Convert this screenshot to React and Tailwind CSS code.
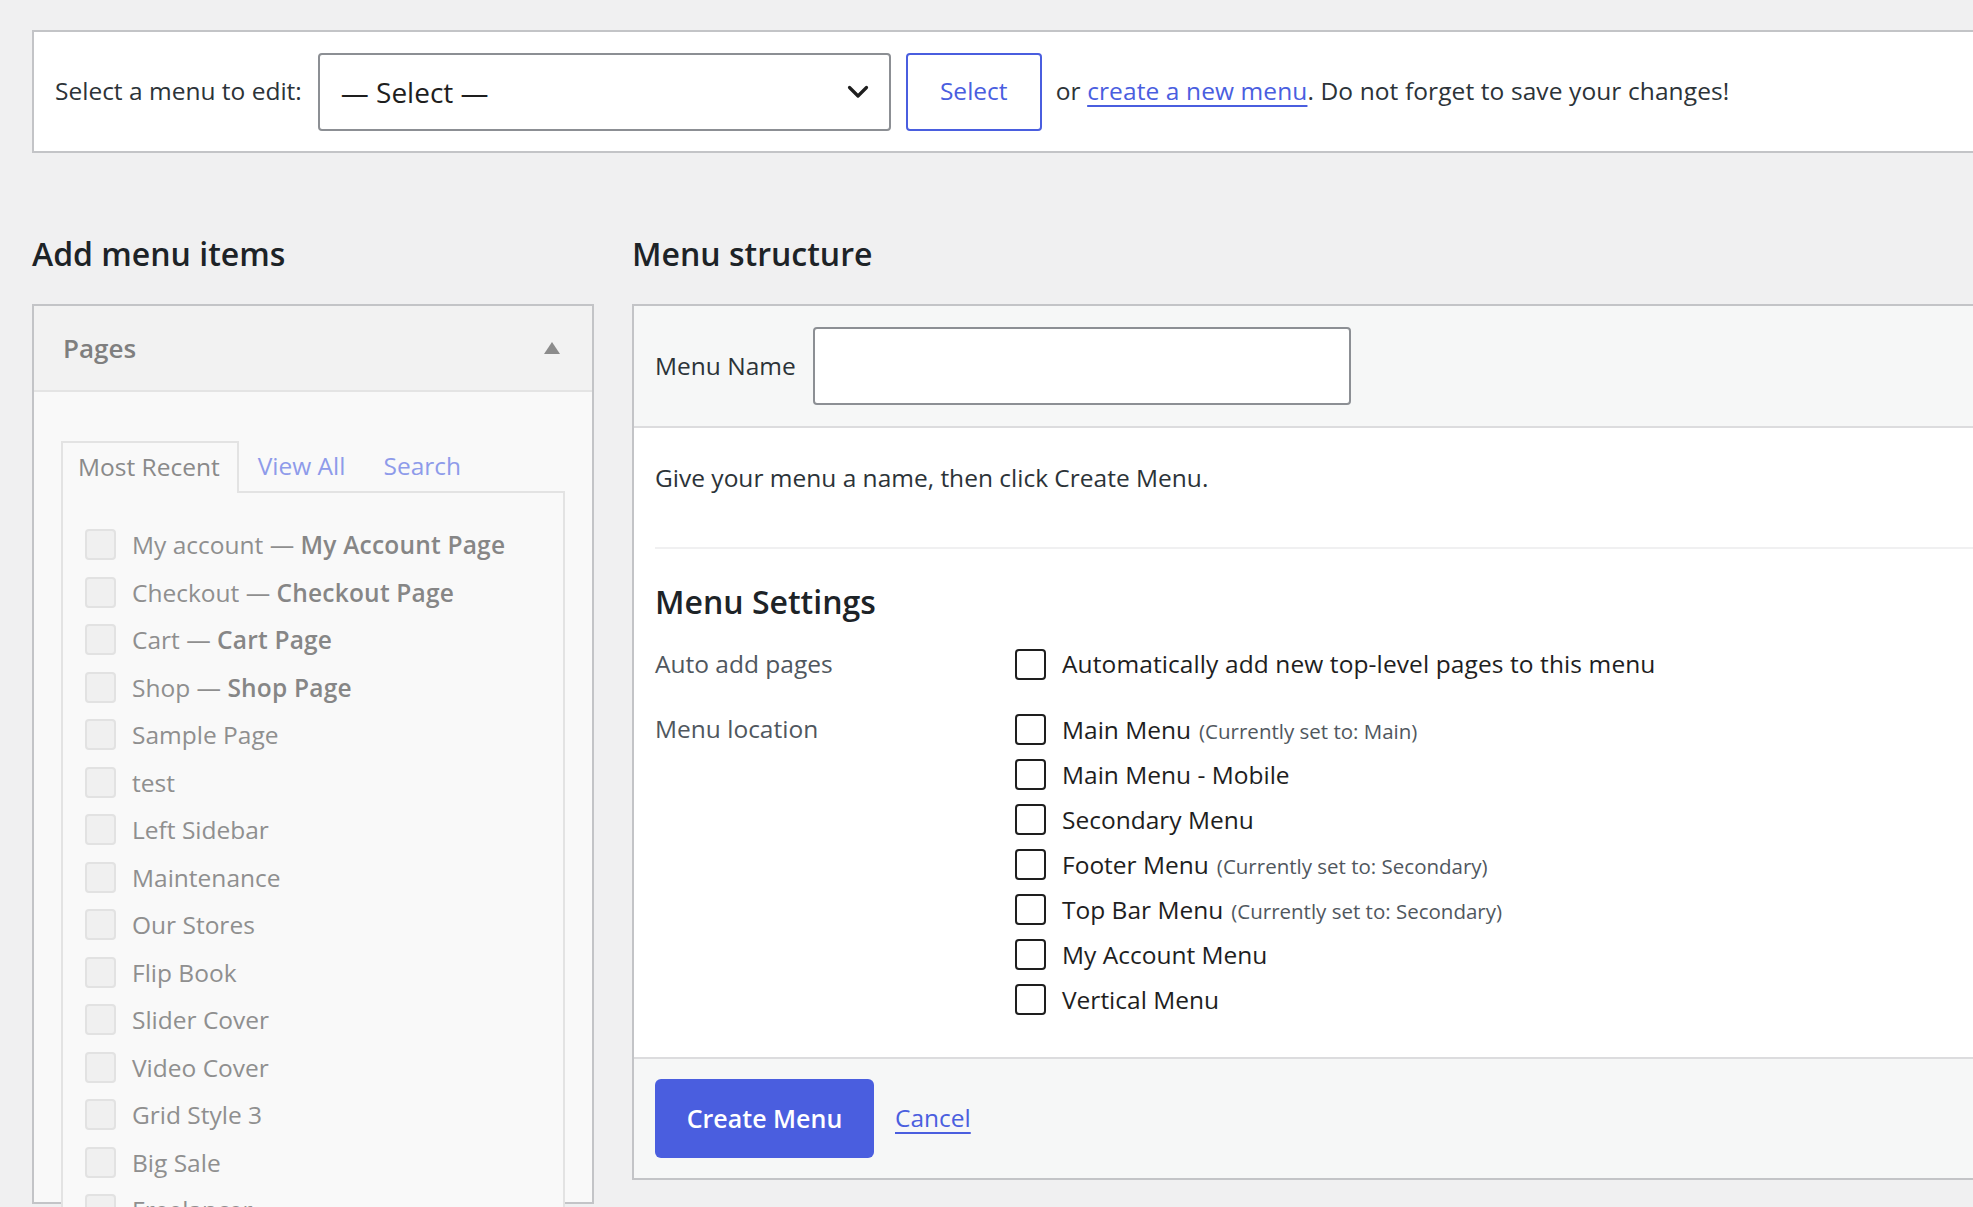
import React from "react";

const recentPages = [
  ["My account", "My Account Page"],
  ["Checkout", "Checkout Page"],
  ["Cart", "Cart Page"],
  ["Shop", "Shop Page"],
  ["Sample Page"],
  ["test"],
  ["Left Sidebar"],
  ["Maintenance"],
  ["Our Stores"],
  ["Flip Book"],
  ["Slider Cover"],
  ["Video Cover"],
  ["Grid Style 3"],
  ["Big Sale"],
  ["Freelancer"],
];

const locations = [
  ["Main Menu", "(Currently set to: Main)"],
  ["Main Menu - Mobile"],
  ["Secondary Menu"],
  ["Footer Menu", "(Currently set to: Secondary)"],
  ["Top Bar Menu", "(Currently set to: Secondary)"],
  ["My Account Menu"],
  ["Vertical Menu"],
];

function Chevron() {
  return (
    <svg width="22" height="14" viewBox="0 0 22 14" fill="none">
      <path d="M2.5 2.5 L11 11 L19.5 2.5" stroke="#1e1e1e" strokeWidth="3.2" strokeLinecap="round" strokeLinejoin="round" />
    </svg>
  );
}

function Box() {
  return <span className="block h-[31px] w-[31px] shrink-0 rounded-[4px] border-2 border-[#1e1e1e] bg-white" />;
}

function FadedBox() {
  return <span className="block h-[31px] w-[31px] shrink-0 rounded-[4px] border-2 border-[#e2e2e2] bg-[#f0f0f0]" />;
}

export default function App() {
  return (
    <div className="h-[1207px] w-[1973px] overflow-hidden bg-[#f0f0f1] font-['Open_Sans','Noto_Sans',sans-serif] text-[24.5px] text-[#1d2327]">
      <div className="pl-[32px] pt-[30px]">
        {/* menu picker bar */}
        <div className="-mr-[40px] flex h-[123px] items-center border-2 border-[#c3c4c7] bg-white pl-[21px]">
          <span className="text-[#2c3338]">Select a menu to edit:</span>
          <div className="ml-[16px] flex h-[78px] w-[573px] items-center justify-between rounded-[4px] border-2 border-[#8c8f94] bg-white pl-[21px] pr-[20px]">
            <span className="text-[28px] text-[#1e1e1e]">— Select —</span>
            <Chevron />
          </div>
          <button className="ml-[15px] h-[78px] w-[136px] rounded-[4px] border-2 border-[#4a5edf] bg-white text-[24.5px] font-medium text-[#4a5edf]">
            Select
          </button>
          <span className="ml-[14px] tracking-[0.1px] text-[#2c3338]">
            or{" "}
            <a href="#" className="text-[#4a5edf] underline decoration-[2px] underline-offset-[5px]">
              create a new menu
            </a>
            . Do not forget to save your changes!
          </span>
        </div>

        <div className="mt-[81px] flex gap-[38px]">
          {/* left column */}
          <div className="w-[562px] shrink-0">
            <h2 className="h-[40px] text-[32px] font-semibold leading-[40px] text-[#1d2327]">Add menu items</h2>
            <div className="mt-[30px] h-[900px] border-2 border-[#c3c4c7] bg-[#f9f9f9]">
              <div className="flex h-[86px] items-center justify-between border-b-2 border-[#e4e4e4] bg-[#f2f2f2] pl-[29px] pr-[32px]">
                <span className="text-[26px] font-semibold text-[#7f7f7f]">Pages</span>
                <svg width="16" height="12" viewBox="0 0 16 12">
                  <path d="M8 0 L16 12 L0 12 Z" fill="#8c8c8c" />
                </svg>
              </div>
              <div className="px-[27px] pt-[49px]">
                <div className="flex items-end">
                  <div className="relative z-10 -mb-[2px] flex h-[52px] items-center border-2 border-b-0 border-[#e3e3e3] bg-[#f9f9f9] pb-[2px] pl-[15px] pr-[17px] text-[#8a8a8a]">
                    Most Recent
                  </div>
                  <div className="flex h-[50px] items-center px-[19px] text-[#8e9bea]">View All</div>
                  <div className="flex h-[50px] items-center px-[19px] text-[#8e9bea]">Search</div>
                </div>
                <div className="h-[800px] border-2 border-[#e3e3e3] bg-[#f9f9f9] pl-[22px] pt-[28px]">
                  {recentPages.map(([name, state]) => (
                    <div key={name} className="flex h-[47.5px] items-center">
                      <FadedBox />
                      <span className="ml-[16px] whitespace-nowrap pt-[2px] text-[#8f8f8f]">
                        {name}
                        {state && (
                          <>
                            {" — "}
                            <span className="font-semibold tracking-[0.2px] text-[#868686]">{state}</span>
                          </>
                        )}
                      </span>
                    </div>
                  ))}
                </div>
              </div>
            </div>
          </div>

          {/* right column */}
          <div className="w-[1400px] shrink-0">
            <h2 className="h-[40px] text-[32px] font-semibold leading-[40px] text-[#1d2327]">Menu structure</h2>
            <div className="mt-[30px] border-2 border-[#c3c4c7] bg-white">
              <div className="flex h-[122px] items-center border-b-2 border-[#dcdcde] bg-[#f6f7f7] pl-[21px]">
                <span className="text-[#2c3338]">Menu Name</span>
                <div className="ml-[17px] h-[78px] w-[538px] rounded-[4px] border-2 border-[#8c8f94] bg-white" />
              </div>

              <div className="pb-[35px] pl-[21px]">
                <p className="mt-[31px] h-[37px] leading-[37px] text-[#2c3338]">
                  Give your menu a name, then click Create Menu.
                </p>
                <div className="mt-[51px] h-[2px] bg-[#f0f0f1]" />
                <h3 className="mt-[33px] h-[40px] text-[32px] font-semibold leading-[40px] text-[#1d2327]">Menu Settings</h3>

                <div className="mt-[20px] flex">
                  <div className="flex h-[45px] w-[360px] items-center text-[#50575e]">Auto add pages</div>
                  <div className="flex h-[45px] items-center">
                    <Box />
                    <span className="ml-[16px] tracking-[0.1px] text-[#1e1e1e]">Automatically add new top-level pages to this menu</span>
                  </div>
                </div>

                <div className="mt-[20px] flex">
                  <div className="flex h-[45px] w-[360px] items-center text-[#50575e]">Menu location</div>
                  <div>
                    {locations.map(([name, note]) => (
                      <div key={name} className="flex h-[45px] items-center">
                        <Box />
                        <span className="ml-[16px] pt-[2px] text-[#1e1e1e]">
                          {name}
                          {note && <span className="ml-[8px] text-[20.5px] text-[#50575e]">{note}</span>}
                        </span>
                      </div>
                    ))}
                  </div>
                </div>
              </div>

              <div className="flex items-center border-t-2 border-[#dcdcde] bg-[#f6f7f7] px-[21px] py-[20px]">
                <button className="h-[79px] w-[219px] rounded-[6px] bg-[#4a5edf] text-[25px] font-semibold text-white">
                  Create Menu
                </button>
                <a href="#" className="ml-[21px] text-[#4a5edf] underline decoration-[2px] underline-offset-[5px]">
                  Cancel
                </a>
              </div>
            </div>
          </div>
        </div>
      </div>
    </div>
  );
}
